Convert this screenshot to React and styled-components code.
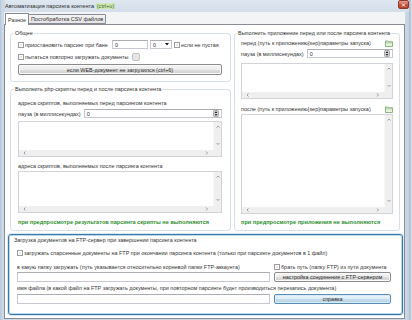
import styled, { createGlobalStyle } from 'styled-components';

const GlobalStyle = createGlobalStyle`
  html, body { margin: 0; padding: 0; background: #fff; }
  body { font-family: "Liberation Sans", Arial, sans-serif; }
`;

const Window = styled.div`
  width: 412px;
  height: 320px;
  box-sizing: border-box;
  display: flex;
  flex-direction: column;
  overflow: hidden;
  padding: 0 7px 0 4px;
  background: linear-gradient(90deg, #b4c5d8 0px, #cbd8e6 2px, #cbd8e6 405px, #c3d1e0 409px, #9eafc2 410px, #d6e0ea 411px);
  font-size: 5.45px;
  line-height: 6px;
  color: #333;
`;

const TitleBar = styled.div`
  height: 12px;
  flex: none;
  display: flex;
  align-items: center;
  justify-content: space-between;
  margin: 0 -4px 0 1px;
  background: linear-gradient(#dfe7f0, #d3dee9);
`;

const Title = styled.span`
  color: #2a2a2a;
  font-size: 5.6px;
`;

const Hotkey = styled.span`
  background: #cfe8b6;
  color: #3e6a2a;
  padding: 0 1px;
`;

const CloseButton = styled.div`
  width: 9px;
  height: 7px;
  margin-top: -3px;
  border: 1px solid #8d3a2e;
  border-radius: 2px;
  background: linear-gradient(#e6a195, #c7503d 55%, #b9402d);
  display: flex;
  align-items: center;
  justify-content: center;
`;

const TabStrip = styled.div`
  height: 12px;
  flex: none;
  display: flex;
  align-items: flex-end;
  padding-left: 1px;
  background: #f3f4f6;
`;

const Tab = styled.div`
  box-sizing: border-box;
  height: ${p => (p.$active ? '12px' : '10px')};
  margin-bottom: ${p => (p.$active ? '-1px' : '0')};
  padding: 0 2px;
  display: flex;
  align-items: center;
  border: 1px solid #898c95;
  border-bottom: ${p => (p.$active ? 'none' : '1px solid #898c95')};
  border-radius: 1px 1px 0 0;
  background: ${p => (p.$active ? '#fff' : 'linear-gradient(#f4f4f4, #e4e4e4)')};
  position: relative;
  z-index: ${p => (p.$active ? 1 : 0)};
  & + & { margin-left: -1px; }
`;

const Panel = styled.div`
  flex: 1;
  box-sizing: border-box;
  margin-bottom: 1px;
  border: 1px solid #898c95;
  background: #fff;
  padding: 5px 0 2px 0;
  display: flex;
  flex-direction: column;
  gap: 3px;
`;

const Columns = styled.div`
  display: grid;
  grid-template-columns: 221px 166px;
  column-gap: 3px;
  margin-left: 5px;
`;

const Column = styled.div`
  display: flex;
  flex-direction: column;
  gap: 4px;
`;

const Group = styled.fieldset`
  margin: 0;
  min-width: 0;
  border: 1px solid #d5dfe5;
  border-radius: 3px;
  padding: ${p => p.$pt}px ${p => p.$pr}px ${p => p.$pb}px ${p => p.$pl}px;
  display: flex;
  flex-direction: column;
`;

const Legend = styled.legend`
  padding: 0 1px;
  margin-left: -4px;
  line-height: 6px;
  white-space: nowrap;
  color: #2f2f2f;
`;

const Row = styled.div`
  display: flex;
  align-items: center;
  gap: ${p => p.$gap ?? 1}px;
  height: ${p => p.$h ?? 6}px;
  margin-top: ${p => p.$mt ?? 0}px;
  flex: none;
  white-space: nowrap;
`;

const TopRow = styled.div`
  display: grid;
  grid-template-columns: 92px 36px 22px 1fr;
  column-gap: 2px;
  align-items: center;
  height: 9px;
  white-space: nowrap;
`;

const CheckLabel = styled.label`
  display: flex;
  align-items: center;
  gap: 1px;
  white-space: nowrap;
`;

const CheckBox = styled.span`
  box-sizing: border-box;
  width: 6px;
  height: 6px;
  flex: none;
  border: 1px solid #9a9b9c;
  background: linear-gradient(135deg, #d3d6db, #f7f7f7);
  box-shadow: inset 0 0 0 1px #fff;
`;

const Input = styled.div`
  box-sizing: border-box;
  height: ${p => p.$h ?? 9}px;
  flex: 1;
  min-width: 0;
  border: 1px solid #c5c8cf;
  border-top-color: #abadb3;
  background: #fff;
  padding: 0 2px;
  display: flex;
  align-items: center;
  justify-content: space-between;
`;

const Select = styled(Input)`
  padding: 0 2px 0 2px;
`;

const Button = styled.div`
  box-sizing: border-box;
  height: ${p => p.$h ?? 10}px;
  border: 1px solid ${p => (p.$primary ? '#5a8db5' : '#8b8b8b')};
  border-radius: 2px;
  background: ${p =>
    p.$primary
      ? 'linear-gradient(#eef6fb, #dcebf5 50%, #c6dced 50%, #b9d3e6)'
      : 'linear-gradient(#f4f4f4, #ececec 50%, #dedede 50%, #d2d2d2)'};
  box-shadow: inset 0 0 0 1px ${p => (p.$primary ? '#d6ebf8' : '#fbfbfb')};
  display: flex;
  align-items: center;
  justify-content: center;
  white-space: nowrap;
  color: #2a2a2a;
`;

const MiniButton = styled(Button)`
  width: 8px;
  height: 8px;
  border-color: #c3c3c3;
  background: #e6e6e6;
  box-shadow: none;
  margin-left: 2px;
`;

const Scroll = styled.div`
  box-sizing: border-box;
  display: grid;
  grid-template-columns: 1fr 8px;
  grid-template-rows: 1fr 6px;
  height: ${p => (p.$h ? `${p.$h}px` : 'auto')};
  flex: ${p => (p.$grow ? 1 : 'none')};
  margin-top: ${p => p.$mt ?? 0}px;
  border: 1px solid #d0d3d8;
  background: #fff;
`;

const VBar = styled.div`
  background: #efefef;
  border-left: 1px solid #f7f7f7;
  display: flex;
  flex-direction: column;
  justify-content: space-between;
  align-items: center;
  padding: 3px 0 4px;
`;

const HBar = styled.div`
  background: #efefef;
  display: flex;
  justify-content: space-between;
  align-items: center;
  padding: 0 4px;
`;

const Corner = styled.div`
  background: #efefef;
`;

const Note = styled.div`
  height: 6px;
  margin-top: ${p => p.$mt ?? 0}px;
  font-weight: bold;
  font-size: 5.6px;
  color: #2f8f2f;
  white-space: nowrap;
`;

const FtpBox = styled.div`
  margin: 0 1px 0 3px;
  border: 1px solid #3c78a6;
  border-radius: 3px;
  box-shadow: inset 0 0 0 1px #b8d8ef, 0 0 0 1px #d7e8f5;
  padding: 2px 11px 10px 8px;
  display: flex;
  flex-direction: column;
`;

const FtpTitle = styled.div`
  height: 6px;
  margin-left: -3px;
  white-space: nowrap;
`;

const FtpGrid = styled.div`
  display: grid;
  grid-template-columns: 1fr 117px;
  column-gap: 4px;
  align-items: center;
  margin-top: ${p => p.$mt ?? 0}px;
  height: ${p => p.$h}px;
  white-space: nowrap;
`;

function Chevron({ dir }) {
  const d = {
    up: 'M0.5 2.5 L2 1 L3.5 2.5',
    down: 'M0.5 1 L2 2.5 L3.5 1',
    left: 'M2.5 0.5 L1 2 L2.5 3.5',
    right: 'M1 0.5 L2.5 2 L1 3.5',
  }[dir];
  return (
    <svg width="4" height="4" viewBox="0 0 4 4">
      <path d={d} fill="none" stroke="#8a8a8a" strokeWidth="0.8" />
    </svg>
  );
}

function TextBox({ h, grow, mt }) {
  return (
    <Scroll $h={h} $grow={grow} $mt={mt}>
      <div />
      <VBar>
        <Chevron dir="up" />
        <Chevron dir="down" />
      </VBar>
      <HBar>
        <Chevron dir="left" />
        <Chevron dir="right" />
      </HBar>
      <Corner />
    </Scroll>
  );
}

function Spinner() {
  return (
    <svg width="6" height="7" viewBox="0 0 6 7">
      <rect x="0.5" y="0.5" width="5" height="6" rx="1" fill="#d8d8d8" stroke="#7a7a7a" strokeWidth="0.6" />
      <path d="M1.5 3 L3 1.3 L4.5 3 Z M1.5 4 L3 5.7 L4.5 4 Z" fill="#222" />
    </svg>
  );
}

function Folder() {
  return (
    <svg width="8" height="7" viewBox="0 0 8 7">
      <path d="M0.5 1 H3 L3.8 1.8 H7.5 V6.5 H0.5 Z" fill="#e6f2dc" stroke="#6f9f62" strokeWidth="0.8" />
      <path d="M0.5 2.8 H7.5" stroke="#8fba82" strokeWidth="0.6" />
    </svg>
  );
}

function PauseRow({ mt }) {
  return (
    <Row $h={9} $mt={mt} $gap={3}>
      <span>пауза (в миллисекундах)</span>
      <Input>
        <span>0</span>
        <Spinner />
      </Input>
    </Row>
  );
}

export default function App() {
  return (
    <>
      <GlobalStyle />
      <Window>
        <TitleBar>
          <Title>
            Автоматизация парсинга контента <Hotkey>(ctrl+u)</Hotkey>
          </Title>
          <CloseButton>
            <svg width="5" height="4" viewBox="0 0 5 4">
              <path d="M1 0.5 L4 3.5 M4 0.5 L1 3.5" stroke="#fff" strokeWidth="1" />
            </svg>
          </CloseButton>
        </TitleBar>

        <TabStrip>
          <Tab $active>Разное</Tab>
          <Tab>Постобработка CSV файлов</Tab>
        </TabStrip>

        <Panel>
          <Columns>
            <Column>
              <Group $pt={4} $pr={8} $pb={6} $pl={7}>
                <Legend>Общее</Legend>
                <TopRow>
                  <CheckLabel>
                    <CheckBox />
                    приостановить парсинг при бане
                  </CheckLabel>
                  <Input>
                    <span>0</span>
                  </Input>
                  <Select>
                    <span>0</span>
                    <svg width="4" height="3" viewBox="0 0 4 3">
                      <path d="M0 0 H4 L2 2.5 Z" fill="#111" />
                    </svg>
                  </Select>
                  <CheckLabel>
                    <CheckBox />
                    если не пустая
                  </CheckLabel>
                </TopRow>
                <Row $h={8} $mt={4}>
                  <CheckLabel>
                    <CheckBox />
                    пытаться повторно загружать документы
                  </CheckLabel>
                  <MiniButton />
                </Row>
                <Button $h={11} style={{ marginTop: 3 }}>
                  если WEB-документ не загрузился (ctrl+6)
                </Button>
              </Group>

              <Group $pt={8} $pr={8} $pb={5} $pl={7}>
                <Legend>Выполнить php-скрипты перед и после парсинга контента</Legend>
                <Row>адреса скриптов, выполняемых перед парсингом контента</Row>
                <PauseRow mt={3} />
                <TextBox h={36} mt={3} />
                <Row $mt={6}>адреса скриптов, выполняемых после парсинга контента</Row>
                <TextBox h={42} mt={2} />
                <Note $mt={6}>при предпросмотре результатов парсинга скрипты не выполняются</Note>
              </Group>
            </Column>

            <Group $pt={4} $pr={6} $pb={5} $pl={6}>
              <Legend>Выполнить приложение перед или после парсинга контента</Legend>
              <Row style={{ justifyContent: 'space-between' }}>
                <span>перед (путь к приложению{'{sep}'}параметры запуска)</span>
                <Folder />
              </Row>
              <PauseRow mt={3} />
              <TextBox h={36} mt={5} />
              <Row $mt={7} style={{ justifyContent: 'space-between' }}>
                <span>после (путь к приложению{'{sep}'}параметры запуска)</span>
                <Folder />
              </Row>
              <TextBox grow mt={2} />
              <Note $mt={5}>при предпросмотре приложения не выполняются</Note>
            </Group>
          </Columns>

          <FtpBox>
            <FtpTitle>Загрузка документов на FTP-сервер при завершении парсинга контента</FtpTitle>
            <Row $mt={7}>
              <CheckLabel>
                <CheckBox />
                загружать спарсенные документы на FTP при окончании парсинга контента (только при парсинге документов в 1 файл)
              </CheckLabel>
            </Row>
            <FtpGrid $mt={8} $h={6}>
              <span>в какую папку загружать (путь указывается относительно корневой папки FTP-аккаунта)</span>
              <CheckLabel>
                <CheckBox />
                брать путь (папку FTP) из пути документа
              </CheckLabel>
            </FtpGrid>
            <FtpGrid $mt={2} $h={10}>
              <Input $h={10} />
              <Button $h={10}>настройка соединения с FTP-сервером</Button>
            </FtpGrid>
            <Row $mt={3}>
              имя файла (в какой файл на FTP загружать документы, при повторном парсинге будет производиться перезапись документа)
            </Row>
            <FtpGrid $mt={3} $h={10}>
              <Input $h={10} />
              <Button $h={10} $primary>справка</Button>
            </FtpGrid>
          </FtpBox>
        </Panel>
      </Window>
    </>
  );
}
